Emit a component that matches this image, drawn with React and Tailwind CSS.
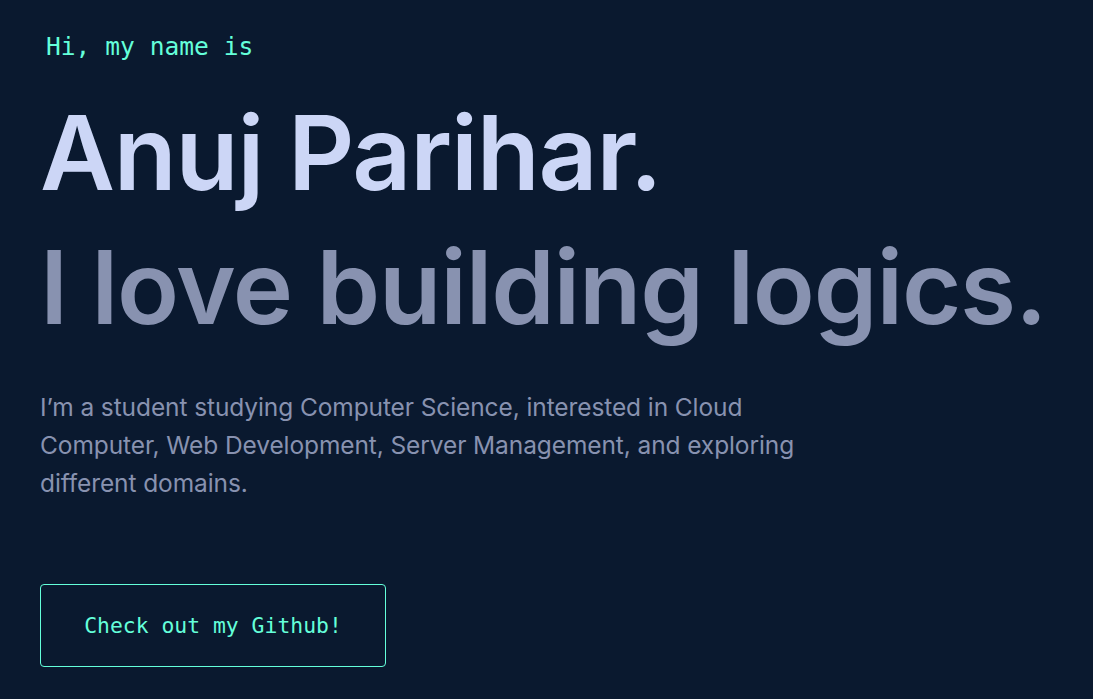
import React from 'react';

export default function App() {
  return (
    <div className="min-h-screen bg-[#0a192f] pl-10 pt-[29px] font-['Inter',sans-serif]">
      {/* intro line */}
      <p className="ml-[6px] text-[24.6px] leading-[36px] text-[#64ffda] font-['DejaVu_Sans_Mono',monospace]">
        Hi, my name is
      </p>

      <h1 className="mt-[31px] text-[103px] leading-[1.1] font-semibold tracking-[-1.2px] text-[#ccd6f6] whitespace-nowrap">
        Anuj Parihar.
      </h1>
      <h2 className="mt-[22px] text-[102px] leading-[1.1] font-semibold tracking-[-1.2px] text-[#8892b0] whitespace-nowrap">
        I love building logics.
      </h2>

      <p className="mt-[45px] text-[24.5px] leading-[38px] tracking-[-0.1px] text-[#8892b0]">
        <span className="block whitespace-nowrap">I’m a student studying Computer Science, interested in Cloud</span>
        <span className="block whitespace-nowrap">Computer, Web Development, Server Management, and exploring</span>
        <span className="block whitespace-nowrap">different domains.</span>
      </p>

      <a
        href="#"
        className="mt-[82px] flex h-[83px] w-[346px] items-center justify-center rounded-[4px] border border-[#64ffda] text-[21.4px] text-[#64ffda] font-['DejaVu_Sans_Mono',monospace]"
      >
        Check out my Github!
      </a>
    </div>
  );
}
